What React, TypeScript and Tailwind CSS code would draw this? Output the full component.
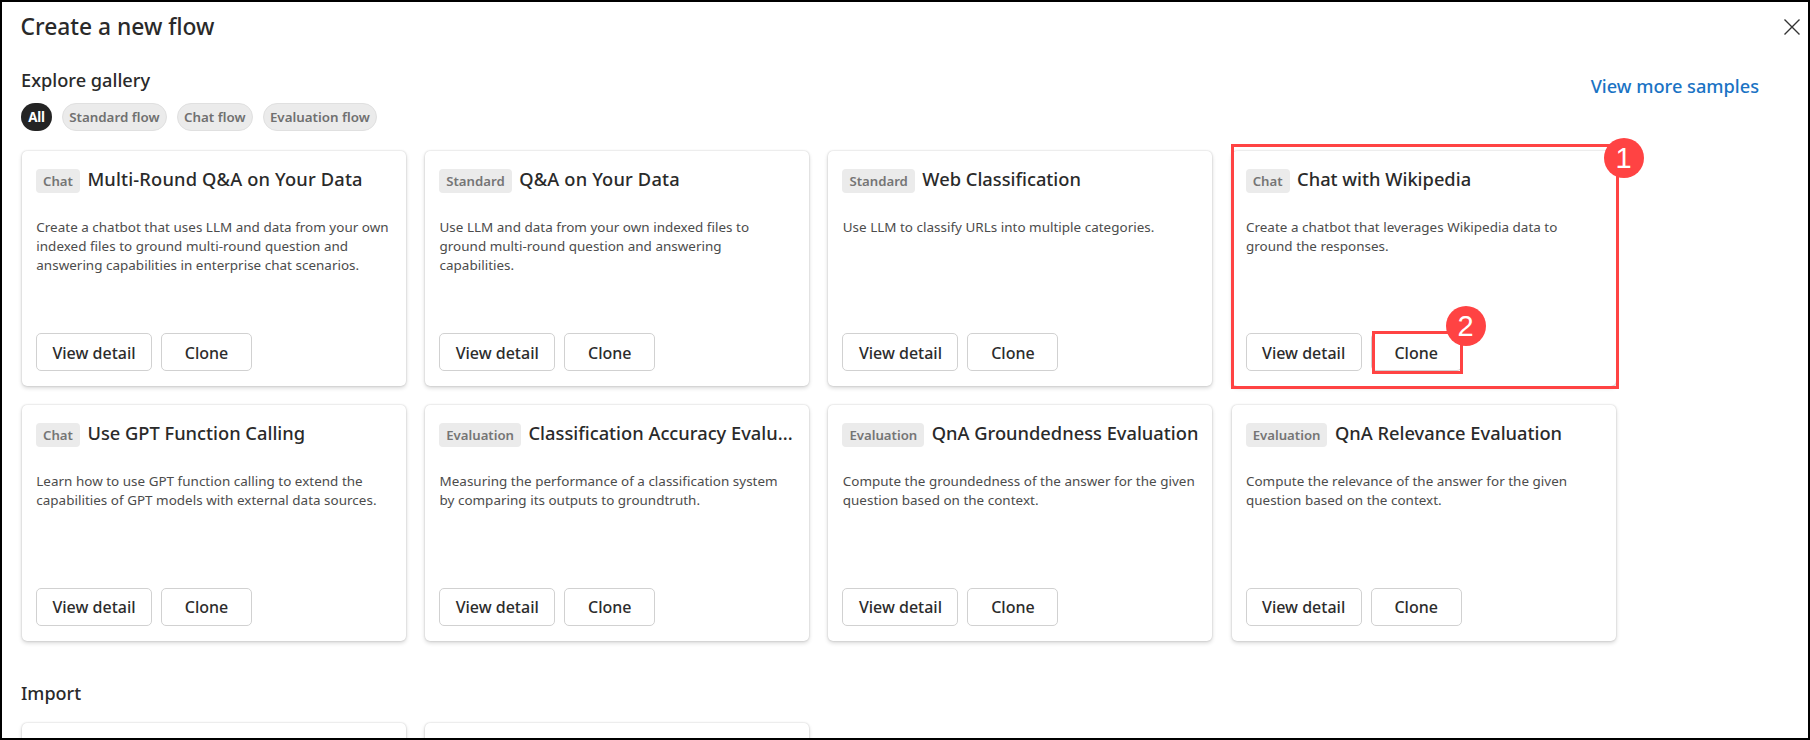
type Flow = {
  kind: string;
  title: string;
  lines: string[];
  highlighted?: boolean;
  wide?: boolean;
};

const flows: Flow[] = [
  {
    kind: "Chat",
    title: "Multi-Round Q&A on Your Data",
    wide: true,
    lines: [
      "Create a chatbot that uses LLM and data from your own",
      "indexed files to ground multi-round question and",
      "answering capabilities in enterprise chat scenarios.",
    ],
  },
  {
    kind: "Standard",
    title: "Q&A on Your Data",
    wide: true,
    lines: [
      "Use LLM and data from your own indexed files to",
      "ground multi-round question and answering",
      "capabilities.",
    ],
  },
  {
    kind: "Standard",
    title: "Web Classification",
    lines: ["Use LLM to classify URLs into multiple categories."],
  },
  {
    kind: "Chat",
    title: "Chat with Wikipedia",
    lines: ["Create a chatbot that leverages Wikipedia data to", "ground the responses."],
    highlighted: true,
  },
  {
    kind: "Chat",
    title: "Use GPT Function Calling",
    lines: [
      "Learn how to use GPT function calling to extend the",
      "capabilities of GPT models with external data sources.",
    ],
  },
  {
    kind: "Evaluation",
    title: "Classification Accuracy Evalu...",
    lines: [
      "Measuring the performance of a classification system",
      "by comparing its outputs to groundtruth.",
    ],
  },
  {
    kind: "Evaluation",
    title: "QnA Groundedness Evaluation",
    lines: ["Compute the groundedness of the answer for the given", "question based on the context."],
  },
  {
    kind: "Evaluation",
    title: "QnA Relevance Evaluation",
    lines: ["Compute the relevance of the answer for the given", "question based on the context."],
  },
];

const filters = ["Standard flow", "Chat flow", "Evaluation flow"];

const cardSurface =
  "rounded-[5px] bg-white shadow-[0_0_2px_rgba(0,0,0,0.2),0_2px_4px_rgba(0,0,0,0.16)]";

function StepBadge({ n, place }: { n: number; place: string }) {
  return (
    <span
      className={`absolute z-10 flex size-10 items-center justify-center rounded-full bg-[#ff4343] font-['Liberation_Sans',sans-serif] text-[29px] leading-none text-white ${place}`}
    >
      {n}
    </span>
  );
}

function FlowCard({ flow }: { flow: Flow }) {
  const button =
    "flex h-[38px] items-center justify-center rounded-[5px] border border-[#d1d1d1] bg-white pt-px text-[16px] font-medium text-[#2c2c2c]";
  return (
    <article className={`relative flex h-[235.33px] flex-col px-[14px] pt-[18px] pb-[15px] ${cardSurface}`}>
      <div className="flex h-6 items-center gap-[7.5px] whitespace-nowrap">
        <span className="flex h-6 items-center rounded-[4px] bg-[#ebebeb] px-[7px] pt-px text-[13.2px] font-semibold text-[#757575]">
          {flow.kind}
        </span>
        <h3
          className={`-mt-[4px] text-[18.3px] leading-6 font-medium text-[#2a2a2a] ${flow.wide ? "tracking-[0.16px]" : ""}`}
        >
          {flow.title}
        </h3>
      </div>
      <p className="mt-[25px] pl-[0.3px] text-[13.45px] leading-[19px] tracking-[0.02px] whitespace-nowrap text-[#4c4c4c]">
        {flow.lines.map((line) => (
          <span key={line} className="block">
            {line}
          </span>
        ))}
      </p>
      <div className="mt-auto flex gap-[9px]">
        <button className={`w-[116px] ${button}`}>View detail</button>
        <div className="relative">
          <button className={`w-[91px] ${button}`}>Clone</button>
          {flow.highlighted && (
            <>
              <span className="absolute -top-[2px] left-px h-[43px] w-[91px] border-3 border-[#ff4343]" />
              <StepBadge n={2} place="left-[75px] -top-[27px]" />
            </>
          )}
        </div>
      </div>
      {flow.highlighted && (
        <>
          <span className="absolute -top-[7px] -left-px h-[245px] w-[388px] border-3 border-[#ff4343]" />
          <StepBadge n={1} place="left-[372px] -top-[13px]" />
        </>
      )}
    </article>
  );
}

export default function App() {
  return (
    <main className="h-[740px] w-[1810px] overflow-hidden border-2 border-black bg-white font-['Noto_Sans','Open_Sans',sans-serif] text-[#2a2a2a]">
      <header className="flex h-[50px] items-center justify-between pr-[7px] pl-[18.5px]">
        <h1 className="text-[22.8px] leading-8 font-medium">Create a new flow</h1>
        <button aria-label="Close">
          <svg width="18" height="18" viewBox="0 0 18 18" fill="none" stroke="#333" strokeWidth="1.4">
            <path d="M1.5 1.5 16.5 16.5M16.5 1.5 1.5 16.5" />
          </svg>
        </button>
      </header>

      <section className="flex h-[51px] justify-between pr-[49px] pl-[19px] text-[18.2px] leading-6 font-medium">
        <h2 className="mt-[16px]">Explore gallery</h2>
        <a className="mt-[22px] text-[#1a73c4]">View more samples</a>
      </section>

      <nav className="flex h-7 gap-[10px] pl-[19px] text-[13.35px]">
        <span className="flex w-[31px] items-center justify-center rounded-full bg-[#242424] font-bold tracking-[-0.3px] text-white">
          All
        </span>
        {filters.map((name) => (
          <span
            key={name}
            className="flex items-center rounded-full border border-[#e0e0e0] bg-[#ebebeb] px-[6.2px] font-semibold text-[#707070]"
          >
            {name}
          </span>
        ))}
      </nav>

      <section className="mt-5 grid grid-cols-[repeat(4,384px)] gap-x-[19.22px] gap-y-[19px] pl-5">
        {flows.map((flow) => (
          <FlowCard key={flow.title} flow={flow} />
        ))}
      </section>

      <h2 className="mt-[40.33px] pl-[19px] text-[18px] leading-6 font-medium">Import</h2>
      <section className="mt-[18px] grid grid-cols-[repeat(4,384px)] gap-x-[19.22px] pl-5">
        <div className={`h-[120px] ${cardSurface}`} />
        <div className={`h-[120px] ${cardSurface}`} />
      </section>
    </main>
  );
}
